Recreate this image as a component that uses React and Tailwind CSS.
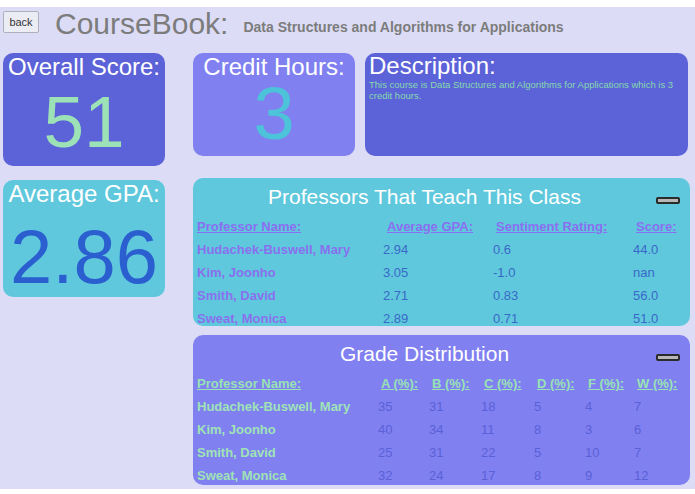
import React from 'react';

const professors = [
  { name: 'Hudachek-Buswell, Mary', gpa: '2.94', sentiment: '0.6', score: '44.0' },
  { name: 'Kim, Joonho', gpa: '3.05', sentiment: '-1.0', score: 'nan' },
  { name: 'Smith, David', gpa: '2.71', sentiment: '0.83', score: '56.0' },
  { name: 'Sweat, Monica', gpa: '2.89', sentiment: '0.71', score: '51.0' },
];

const grades = [
  { name: 'Hudachek-Buswell, Mary', dist: [35, 31, 18, 5, 4, 7] },
  { name: 'Kim, Joonho', dist: [40, 34, 11, 8, 3, 6] },
  { name: 'Smith, David', dist: [25, 31, 22, 5, 10, 7] },
  { name: 'Sweat, Monica', dist: [32, 24, 17, 8, 9, 12] },
];

// little collapse button in the panel corner
function MinusButton() {
  return (
    <button
      type="button"
      aria-label="collapse"
      className="mt-[13px] mr-[10px] h-[7px] w-[24px] shrink-0 rounded-[2px] border-2 border-[#2b2b2b] bg-[#b8b8b8]"
    />
  );
}

function PanelTitle({ children }) {
  return (
    <div className="flex items-start pt-[6px]">
      <h2 className="flex-1 text-center text-[21px] leading-[26px] text-white">{children}</h2>
      <MinusButton />
    </div>
  );
}

export default function App() {
  return (
    <div className="w-[695px] h-[494px] overflow-hidden bg-white font-['Liberation_Sans',Arial,sans-serif]">
      <div className="mt-[7px] h-[482px] bg-[#dcdcf6]">
        {/* header */}
        <div className="flex items-start pl-[3px]">
          <button
            type="button"
            className="mt-[4px] h-[22px] w-[36px] rounded-[2px] border border-[#b0b0bc] bg-[#ececf4] text-[11px] leading-none text-[#333]"
          >
            back
          </button>
          <h1 className="ml-[16px] text-[30px] leading-[34px] text-[#7c7c7c]">CourseBook:</h1>
          <span className="ml-[15px] mt-[12px] text-[14px] font-bold leading-[16px] text-[#7c7c7c]">
            Data Structures and Algorithms for Applications
          </span>
        </div>

        <div className="mt-[12px] flex pl-[3px]">
          {/* left column */}
          <div className="flex w-[162px] flex-col gap-[14px]">
            <div className="h-[113px] rounded-[10px] bg-[#5c62d8] text-center">
              <div className="text-[24px] leading-[28px] text-white">Overall Score:</div>
              <div className="text-[73px] leading-[81px] text-[#9ce2b6]">51</div>
            </div>
            <div className="h-[117px] rounded-[10px] bg-[#5fc8dc] text-center">
              <div className="text-[24px] leading-[28px] text-white">Average GPA:</div>
              <div className="mt-[6px] text-[76px] leading-[85px] text-[#2b5fd0]">2.86</div>
            </div>
          </div>

          {/* right column */}
          <div className="ml-[28px] w-[497px]">
            <div className="flex h-[103px] gap-[10px]">
              <div className="w-[162px] rounded-[10px] bg-[#8080f0] text-center">
                <div className="text-[24px] leading-[28px] text-white">Credit Hours:</div>
                <div className="text-[74px] leading-[66px] text-[#4cc3d8]">3</div>
              </div>
              <div className="w-[323px] rounded-[10px] bg-[#5c62d8] px-[4px]">
                <div className="text-[24px] leading-[26px] text-white">Description:</div>
                <p className="text-[9.5px] leading-[11px] text-[#86d9ae]">
                  This course is Data Structures and Algorithms for Applications which is 3 credit hours.
                </p>
              </div>
            </div>

            <div className="mt-[22px] h-[148px] overflow-hidden rounded-[10px] bg-[#5fc8dc]">
              <PanelTitle>Professors That Teach This Class</PanelTitle>
              <div className="mt-[5px] grid grid-cols-[186px_110px_140px_1fr] pl-[4px] text-[13px] leading-[23px]">
                <div className="font-bold text-[#8a6ff0] underline">Professor Name:</div>
                <div className="pl-[4px] font-bold text-[#8a6ff0] underline">Average GPA:</div>
                <div className="pl-[3px] font-bold text-[#8a6ff0] underline">Sentiment Rating:</div>
                <div className="pl-[3px] font-bold text-[#8a6ff0] underline">Score:</div>
                {professors.map((p) => (
                  <React.Fragment key={p.name}>
                    <div className="font-bold text-[#8a70ee]">{p.name}</div>
                    <div className="text-[#3a68c8]">{p.gpa}</div>
                    <div className="text-[#3a68c8]">{p.sentiment}</div>
                    <div className="text-[#3a68c8]">{p.score}</div>
                  </React.Fragment>
                ))}
              </div>
            </div>

            <div className="mt-[9px] h-[150px] overflow-hidden rounded-[10px] bg-[#8080f0]">
              <PanelTitle>Grade Distribution</PanelTitle>
              <div className="mt-[5px] grid grid-cols-[181px_51px_52px_53px_51px_49px_1fr] pl-[4px] text-[13px] leading-[23px]">
                <div className="font-bold text-[#98e2b4] underline">Professor Name:</div>
                {['A', 'B', 'C', 'D', 'F', 'W'].map((g) => (
                  <div key={g} className="pl-[3px] font-bold text-[#98e2b4] underline">
                    {g} (%):
                  </div>
                ))}
                {grades.map((r) => (
                  <React.Fragment key={r.name}>
                    <div className="font-bold text-[#9fe3b6]">{r.name}</div>
                    {r.dist.map((v, i) => (
                      <div key={i} className="text-[#5a60d8]">{v}</div>
                    ))}
                  </React.Fragment>
                ))}
              </div>
            </div>
          </div>
        </div>
      </div>
    </div>
  );
}
